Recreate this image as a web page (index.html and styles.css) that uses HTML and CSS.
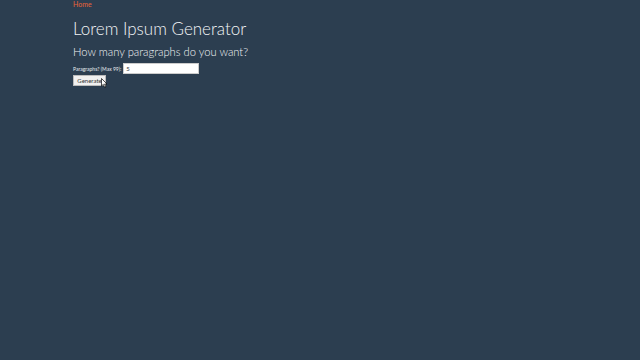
FILE: index.html
```html
<!DOCTYPE html>
<html>
<head>
<meta charset="utf-8">
<link rel="stylesheet" href="styles.css">
</head>
<body>
<div class="page">
  <a class="home" href="#">Home</a>
  <h1 class="title">Lorem Ipsum Generator</h1>
  <h2 class="subtitle">How many paragraphs do you want?</h2>
  <form class="form">
    <div class="row">
      <label class="label">Paragraphs? (Max 99):</label>
      <input class="input" type="text" value="5">
    </div>
    <div class="btnwrap">
      <button class="btn" type="button">Generate</button>
      <svg class="cursor" width="7" height="10" viewBox="0 0 7 10"><path d="M0.5 0.5 L0.5 8 L2.3 6.4 L3.6 9.3 L4.8 8.8 L3.6 6 L6 6 Z" fill="#fff" stroke="#000" stroke-width="0.7"/></svg>
    </div>
  </form>
</div>
</body>
</html>
```
FILE: styles.css
```css
html, body {
  margin: 0;
  padding: 0;
  background: #2c3e50;
  width: 640px;
  height: 360px;
  overflow: hidden;
  font-family: Lato, "Open Sans", sans-serif;
}
.page {
  padding-left: 73px;
  display: flex;
  flex-direction: column;
  align-items: flex-start;
}
.home {
  color: #e8643a;
  font-size: 7px;
  text-decoration: none;
  line-height: 8px;
  font-weight: 400;
}
.title {
  margin: 10px 0 0 0;
  font-size: 17px;
  font-weight: 300;
  color: #f2f4f6;
  line-height: 22px;
}
.subtitle {
  margin: 4px 0 0 0;
  font-size: 11.2px;
  font-weight: 300;
  color: #f2f4f6;
  line-height: 16px;
}
.form {
  margin-top: 3px;
  display: flex;
  flex-direction: column;
  align-items: flex-start;
}
.row {
  display: flex;
  align-items: center;
  gap: 2px;
}
.label {
  font-size: 5px;
  color: #e8ecef;
}
.input {
  box-sizing: border-box;
  width: 76px;
  height: 11px;
  margin: 0;
  border: 1px solid #ccc;
  padding: 0 2px;
  font-size: 6px;
  font-family: Lato, sans-serif;
  color: #333;
  background: #fff;
}
.btnwrap {
  position: relative;
  display: flex;
  margin-top: 1px;
}
.btn {
  box-sizing: border-box;
  width: 33px;
  height: 11px;
  margin: 0;
  padding: 0;
  border: 1px solid #bbb;
  background: #f0f0f0;
  font-size: 6px;
  font-family: Lato, sans-serif;
  color: #333;
}
.cursor {
  position: absolute;
  left: 28px;
  top: 3px;
}
```
